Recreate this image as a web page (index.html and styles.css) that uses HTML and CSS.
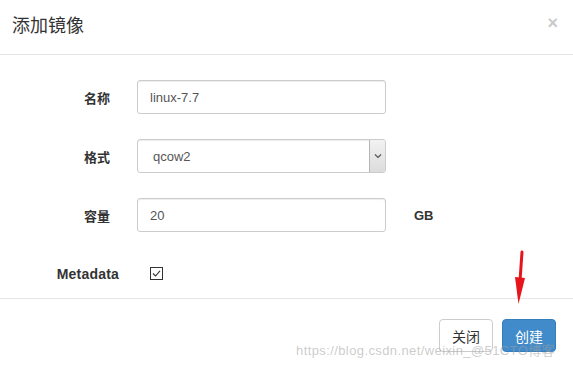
FILE: index.html
```
<!DOCTYPE html>
<html lang="zh">
<head>
<meta charset="utf-8">
<title>添加镜像</title>
<link rel="stylesheet" href="styles.css">
</head>
<body>
<div class="modal">
  <div class="modal-header">
    <h4 class="modal-title">添加镜像</h4>
    <span class="close">×</span>
  </div>
  <div class="modal-body">
    <div class="row">
      <label class="label">名称</label>
      <div class="input">linux-7.7</div>
    </div>
    <div class="row">
      <label class="label">格式</label>
      <div class="input select">
        <span class="select-text">qcow2</span>
        <span class="select-btn">
          <svg width="8" height="6" viewBox="0 0 8 6"><path d="M1 1.5 L4 4.5 L7 1.5" fill="none" stroke="#555" stroke-width="1.2"/></svg>
        </span>
      </div>
    </div>
    <div class="row">
      <label class="label">容量</label>
      <div class="input">20</div>
      <span class="unit">GB</span>
    </div>
    <div class="row">
      <label class="label label-meta">Metadata</label>
      <span class="checkbox">
        <svg width="13" height="13" viewBox="0 0 13 13"><rect x="0.5" y="0.5" width="12" height="12" fill="#fff" stroke="#333"/><path d="M3 6.5 L5.5 9 L10 3.8" fill="none" stroke="#333" stroke-width="1.1"/></svg>
      </span>
    </div>
  </div>
  <div class="modal-footer">
    <button class="btn btn-default">关闭</button>
    <button class="btn btn-primary">创建</button>
  </div>
  <svg class="arrow" width="20" height="60" viewBox="0 0 20 60">
    <path d="M12 2 L10.2 28" stroke="#e8141b" stroke-width="3" stroke-linecap="round"/>
    <path d="M5 27 L15 28 L8.5 54 Z" fill="#e8141b"/>
  </svg>
  <div class="watermark">https://blog.csdn.net/weixin_@51CTO博客</div>
</div>
</body>
</html>
```
FILE: styles.css
```
* { box-sizing: border-box; }
html, body {
  margin: 0;
  padding: 0;
  background: #fff;
}
body {
  font-family: "Liberation Sans", "Noto Sans CJK SC", sans-serif;
  color: #333;
  font-size: 13px;
}
.modal {
  position: relative;
  width: 573px;
  height: 370px;
  overflow: hidden;
}
.modal-header {
  height: 55px;
  border-bottom: 1px solid #e5e5e5;
  display: flex;
  align-items: flex-start;
  justify-content: space-between;
  padding: 13px 15px 0 12px;
}
.modal-title {
  margin: 0;
  font-size: 18px;
  font-weight: normal;
  line-height: 26px;
  color: #333;
}
.close {
  font-size: 18px;
  line-height: 22px;
  font-weight: bold;
  color: #cacaca;
  margin-top: -1px;
}
.modal-body {
  padding: 25px 0 7px 0;
  border-bottom: 1px solid #e5e5e5;
}
.row {
  display: flex;
  align-items: center;
  height: 34px;
  margin-bottom: 25px;
}
.row:last-child { margin-bottom: 0; }
.label {
  width: 110px;
  text-align: right;
  font-weight: bold;
  font-size: 13px;
  color: #333;
  margin-right: 27px;
}
.label-meta {
  width: 119px;
  margin-right: 31px;
  font-size: 14px;
  letter-spacing: 0.2px;
}
.input {
  width: 249px;
  height: 34px;
  border: 1px solid #ccc;
  border-radius: 3px;
  box-shadow: inset 0 1px 1px rgba(0,0,0,0.075);
  padding: 0 12px;
  display: flex;
  align-items: center;
  font-size: 13px;
  color: #555;
}
.select {
  padding: 0 0 0 15px;
  justify-content: space-between;
}
.select-text { flex: 1; }
.select-btn {
  width: 16px;
  height: 32px;
  border-left: 1px solid #b5b5b5;
  background: linear-gradient(#f2f2f2, #dcdcdc);
  display: flex;
  align-items: center;
  justify-content: center;
  border-radius: 0 2px 2px 0;
}
.unit {
  margin-left: 28px;
  font-weight: bold;
  font-size: 13px;
  color: #333;
}
.checkbox {
  display: flex;
  align-items: center;
  margin-top: -2px;
}
.modal-footer {
  display: flex;
  justify-content: flex-end;
  gap: 9px;
  padding: 20px 17px 0 0;
}
.btn {
  width: 54px;
  height: 33px;
  border-radius: 4px;
  font-family: "Liberation Sans", "Noto Sans CJK SC", sans-serif;
  font-size: 14px;
  padding: 0;
  cursor: pointer;
}
.btn-default {
  background: #fff;
  border: 1px solid #ccc;
  color: #333;
}
.btn-primary {
  background: #428bca;
  border: 1px solid #357ebd;
  color: #fff;
}
.arrow {
  position: absolute;
  left: 510px;
  top: 250px;
}
.watermark {
  position: absolute;
  left: 296px;
  top: 340px;
  font-size: 13px;
  color: rgba(160,160,160,0.55);
  white-space: nowrap;
  letter-spacing: 0.4px;
}
```
